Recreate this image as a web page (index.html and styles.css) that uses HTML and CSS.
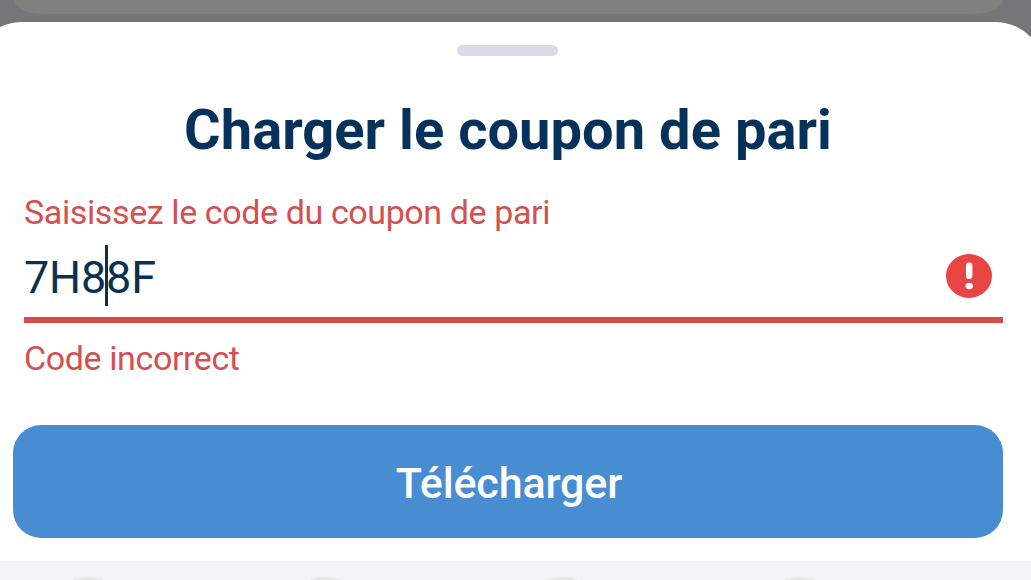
FILE: index.html
```html
<!DOCTYPE html>
<html lang="fr">
<head>
  <meta charset="UTF-8">
  <title>Charger le coupon de pari</title>
  <link rel="stylesheet" href="styles.css">
</head>
<body>
  <div class="page">
    <div class="backdrop">
      <div class="card"></div>
    </div>
    <div class="sheet">
      <div class="handle"></div>
      <h1 class="title">Charger le coupon de pari</h1>
      <div class="field">
        <div class="label">Saisissez le code du coupon de pari</div>
        <div class="input">
          <div class="value">7H8<span class="caret"></span>8F</div>
          <svg class="icon" viewBox="0 0 46 44" width="46" height="44">
            <ellipse cx="23" cy="22" rx="23" ry="22" fill="#e84545"/>
            <rect x="20" y="8.5" width="6.4" height="16.5" rx="3" fill="#fff"/>
            <ellipse cx="23.2" cy="32" rx="3.7" ry="3.2" fill="#fff"/>
          </svg>
        </div>
        <div class="error">Code incorrect</div>
      </div>
      <button class="btn">Télécharger</button>
    </div>
    <div class="keyboard">
      <span class="key"></span>
      <span class="key"></span>
      <span class="key"></span>
      <span class="key"></span>
    </div>
  </div>
</body>
</html>
```
FILE: styles.css
```css
* {
  padding: 0;
  margin: 0;
  border: 0;
  box-sizing: border-box;
}
body {
  font-family: Roboto, "Liberation Sans", sans-serif;
  background: #76767a;
}
.page {
  width: 1031px;
  height: 580px;
  overflow: hidden;
}
.backdrop {
  height: 22px;
}
.backdrop .card {
  height: 14px;
  margin: 0 28px 0 14px;
  background: #80807e;
  border-radius: 0 0 30px 30px / 0 0 14px 14px;
}
/* wider than the page, only part of the round corners shows */
.sheet {
  height: 539px;
  margin: 0 -14px 0 -28px;
  padding: 23px 42px 0 41px;
  background: #fff;
  border-radius: 50px 50px 0 0;
}
.handle {
  width: 101px;
  height: 11px;
  margin: 0 0 0 444px;
  border-radius: 6px;
  background: #d9dce8;
}
.title {
  height: 66px;
  margin-top: 41px;
  line-height: 66px;
  font-size: 56px;
  font-weight: 700;
  letter-spacing: 0.05px;
  text-align: center;
  white-space: nowrap;
  color: #06315a;
}
.field {
  height: 262px;
  padding: 29px 0 0 11px;
}
.label,
.error {
  height: 40px;
  line-height: 40px;
  font-size: 34px;
  letter-spacing: -0.39px;
  color: #d35050;
  white-space: nowrap;
}
.input {
  display: flex;
  justify-content: space-between;
  height: 91px;
  padding: 13px 11px 0 0;
  border-bottom: 6px solid #d64c4c;
}
.value {
  height: 61px;
  line-height: 65px;
  font-size: 45px;
  letter-spacing: -0.2px;
  color: #0b3150;
}
.value .caret {
  display: inline-block;
  width: 3px;
  height: 61px;
  margin: 0 -1.5px;
  vertical-align: top;
  background: #0b3150;
}
.icon {
  margin-top: 9px;
}
.error {
  margin-top: 15px;
}
.btn {
  display: block;
  width: 100%;
  height: 113px;
  padding: 2px 0 0 2px;
  border-radius: 28px;
  background: #488cd1;
  color: #fff;
  font-family: inherit;
  font-size: 43px;
  font-weight: 500;
  letter-spacing: -0.15px;
}
.keyboard {
  display: flex;
  gap: 149px;
  height: 19px;
  padding: 16px 0 0 44px;
  background: #f4f4f6;
}
.key {
  flex: none;
  width: 88px;
  height: 88px;
  border-radius: 50%;
  background: #e6e6e7;
}
```
